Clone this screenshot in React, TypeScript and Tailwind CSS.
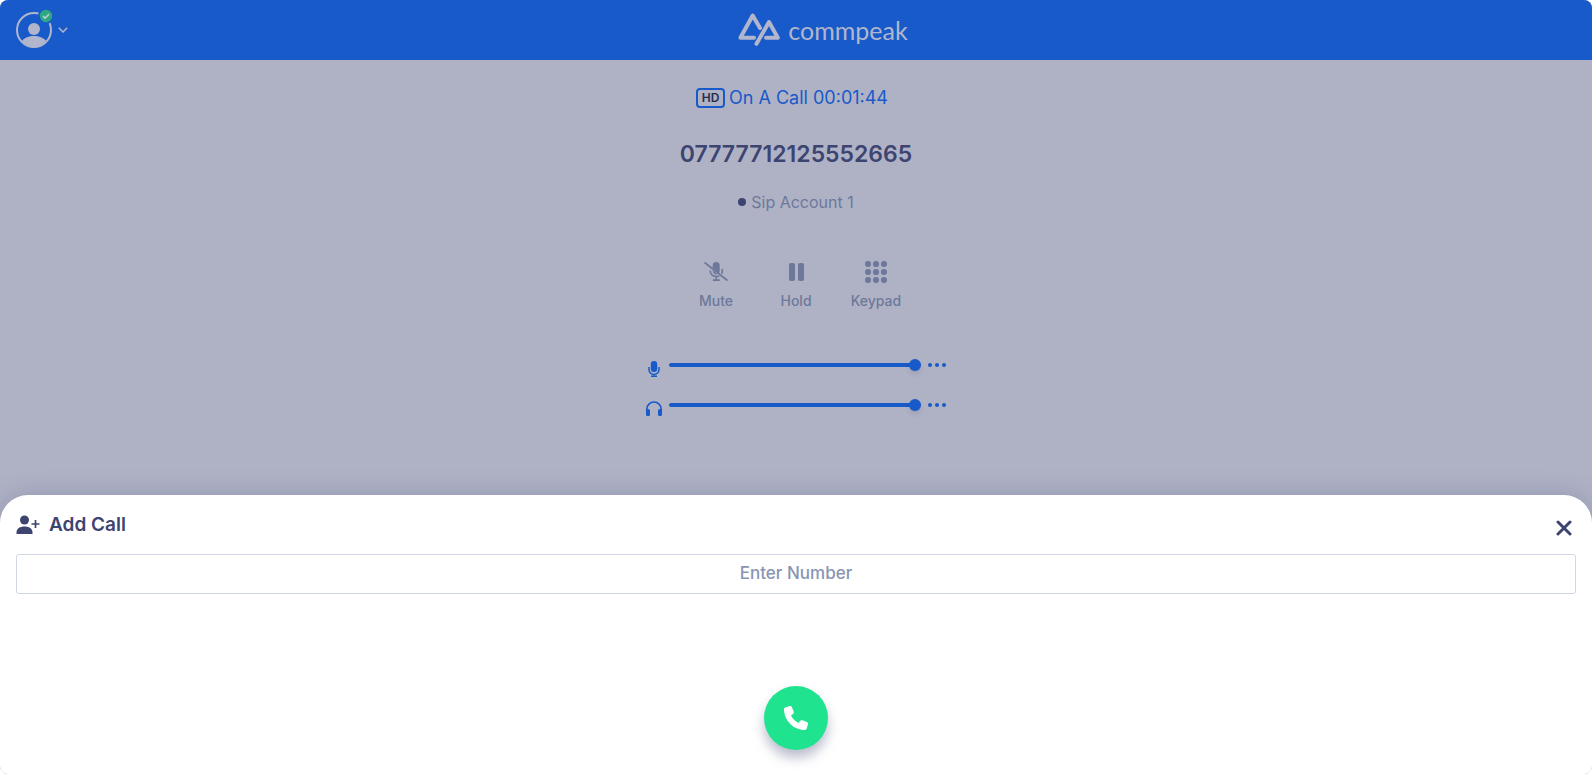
import { useState } from "react";
import type { ReactNode } from "react";

function Logo() {
  return (
    <div className="flex items-center gap-2 text-[#b1b6cc]">
      <svg width="42" height="34" viewBox="0 0 42 34" fill="none" stroke="currentColor" strokeWidth="4" strokeLinecap="round" strokeLinejoin="round">
        <path d="M16 24.700H2.400L14.700 2.500L22 15" />
        <path d="M18.500 30.800L31 9L39.800 24.700H28" />
      </svg>
      <span className="font-['Lato',sans-serif] text-[25px] leading-8">commpeak</span>
    </div>
  );
}

function Avatar() {
  return (
    <span className="relative block size-9">
      <svg width="36" height="36" viewBox="0 0 36 36" fill="none">
        <circle cx="18" cy="18" r="17" stroke="#b1b6cc" strokeWidth="2" />
        <circle cx="18" cy="17" r="6" fill="#b1b6cc" />
        <path d="M6 29C8.500 25.500 13 24 18 24s9.500 1.500 12 5C27 32.500 22.500 34.300 18 34.300S9 32.500 6 29Z" fill="#b1b6cc" />
      </svg>
      <svg className="absolute -top-1 -right-0.5" width="16" height="16" viewBox="0 0 16 16">
        <circle cx="8" cy="8" r="8" fill="#185ac9" />
        <circle cx="8" cy="8" r="6.200" fill="#2da882" />
        <path d="M5 8.200L7 10.200L11.200 6" fill="none" stroke="#b1c9cc" strokeWidth="1.700" />
      </svg>
    </span>
  );
}

function MicIcon() {
  return (
    <svg width="12" height="18" viewBox="0 0 12 18" fill="none">
      <rect x="2.800" y="1" width="6.400" height="11" rx="3" fill="currentColor" />
      <path d="M1 7v2.500a5 5 0 0 0 10 0V7M6 14.500v2M3 16.300h6" stroke="currentColor" strokeWidth="1.500" />
    </svg>
  );
}

function HeadphonesIcon() {
  return (
    <svg width="16" height="16" viewBox="0 0 16 16" fill="none">
      <path d="M.8 11V8.200a7.200 7.200 0 0 1 14.400 0V11" stroke="currentColor" strokeWidth="1.600" />
      <rect x="0" y="8" width="4" height="7" rx="1.500" fill="currentColor" />
      <rect x="12" y="8" width="4" height="7" rx="1.500" fill="currentColor" />
    </svg>
  );
}

function MuteIcon() {
  return (
    <svg width="24" height="22" viewBox="0 0 24 22" fill="none">
      <path d="M8.700 4.500a3.500 3.500 0 0 1 7 0v5.700a3.500 3.500 0 0 1-.6 2L8.700 7Z" fill="currentColor" />
      <path d="M8.700 9.200l5 4.200c-2.500.6-5-.9-5-4.200Z" fill="currentColor" />
      <path d="M6.200 9.500c0 4 3 6 6.300 6 1 0 2-.2 2.800-.6M18.300 8v2c0 1-.2 2-.7 2.800M12.200 15.500v3.500M8.800 19.200h7" stroke="currentColor" strokeWidth="1.700" />
      <path d="M.5 1.500L23.500 19.500" stroke="currentColor" strokeWidth="1.800" />
    </svg>
  );
}

function HoldIcon() {
  return (
    <svg width="16" height="22" viewBox="0 0 16 22" fill="currentColor">
      <rect x="1" y="2" width="6" height="18" rx="2" />
      <rect x="10" y="2" width="6" height="18" rx="2" />
    </svg>
  );
}

function KeypadIcon() {
  return (
    <svg width="22" height="22" viewBox="0 0 22 22" fill="currentColor">
      {[3, 11, 19].map((y) => [3, 11, 19].map((x) => <circle key={`${x}-${y}`} cx={x} cy={y} r="3.100" />))}
    </svg>
  );
}

function CallAction({ label, children }: { label: string; children: ReactNode }) {
  return (
    <button type="button" className="flex w-20 flex-col items-center gap-2 text-sm leading-5 font-medium text-[#6d789a]">
      {children}
      {label}
    </button>
  );
}

function VolumeRow({ label, icon }: { label: string; icon: ReactNode }) {
  const [value, setValue] = useState(100);

  return (
    <div className="flex h-5 items-center text-[#185ac9]">
      <span className="mt-2 flex w-4 justify-center">{icon}</span>
      <input
        type="range"
        aria-label={label}
        value={value}
        onChange={(e) => setValue(Number(e.target.value))}
        className="ml-[7px] h-1 w-[252px] appearance-none rounded-full bg-[#185ac9] [&::-webkit-slider-thumb]:size-3 [&::-webkit-slider-thumb]:appearance-none [&::-webkit-slider-thumb]:rounded-full [&::-webkit-slider-thumb]:bg-[#185ac9] [&::-webkit-slider-thumb]:shadow-md"
      />
      <button type="button" aria-label={`${label} options`} className="ml-[7px] flex gap-[3px]">
        <span className="size-1 rounded-full bg-current" />
        <span className="size-1 rounded-full bg-current" />
        <span className="size-1 rounded-full bg-current" />
      </button>
    </div>
  );
}

function AddCallSheet() {
  return (
    <section className="flex h-[279px] flex-col rounded-t-[28px] bg-white px-4 pt-4 pb-6 shadow-[0_0_24px_rgba(61,68,112,0.25)]">
      <div className="flex h-7 items-center justify-between text-[#3d4470]">
        <h2 className="flex items-center gap-[9px] text-[19px] font-semibold">
          <svg width="24" height="20" viewBox="0 0 24 20" fill="currentColor">
            <circle cx="8.500" cy="5" r="4.500" />
            <path d="M.5 19v-1.500C.5 13.500 4 11.500 8.500 11.500s8 2 8 6V19Z" />
            <path d="M19.500 5v8M15.500 9h8" stroke="currentColor" strokeWidth="1.700" />
          </svg>
          Add Call
        </h2>
        <button type="button" aria-label="Close" className="mt-1.5 mr-1">
          <svg width="16" height="16" viewBox="0 0 16 16" fill="none" stroke="currentColor" strokeWidth="3" strokeLinecap="round">
            <path d="M2 2L14 14M14 2L2 14" />
          </svg>
        </button>
      </div>
      <input
        type="tel"
        aria-label="Enter Number"
        placeholder="Enter Number"
        className="mt-[15px] h-10 w-full rounded-[3px] border border-[#d0d6e6] pb-0.5 text-center text-[17px] font-medium text-[#3d4470] outline-none placeholder:text-[#8995b3]"
      />
      <button
        type="button"
        aria-label="Call"
        className="mx-auto mt-auto flex size-16 items-center justify-center rounded-full bg-[#20e390] text-white shadow-[0_8px_12px_rgba(61,68,112,0.35)]"
      >
        <svg width="24" height="24" viewBox="0 0 24 24" fill="currentColor">
          <path d="M1.200 1.400L5.600.1C6.600-.2 7.500.3 7.900 1.200L9.700 5.500C10 6.300 9.800 7.200 9.200 7.800L7 9.600C8.500 12.800 11.200 15.500 14.400 17L16.200 14.800C16.800 14.200 17.700 14 18.500 14.300L22.800 16.100C23.700 16.500 24.200 17.400 23.900 18.400L22.600 22.800C22.400 23.500 21.700 24 21 24C9.500 24 0 14.500 0 3C0 2.300.5 1.600 1.200 1.400Z" />
        </svg>
      </button>
    </section>
  );
}

export default function App() {
  return (
    <div className="bg-white">
      <div className="flex min-h-screen flex-col overflow-hidden rounded-lg bg-[#afb2c5] font-['Inter',sans-serif]">
        <header className="grid h-[60px] grid-cols-[1fr_auto_1fr] items-center bg-[#185ac9] px-4">
          <button type="button" aria-label="Account menu" className="flex items-center gap-1.5 justify-self-start">
            <Avatar />
            <svg width="10" height="6" viewBox="0 0 10 6" fill="none" stroke="#b1b6cc" strokeWidth="1.500">
              <path d="M.8.8L5 5L9.200.8" />
            </svg>
          </button>
          <div className="ml-[54px]">
            <Logo />
          </div>
        </header>

        <main className="flex flex-1 flex-col items-center">
          <p className="mt-6 flex h-7 items-center gap-1 pr-2 text-lg text-[#185ac9]">
            <span className="flex h-5 w-[29px] items-center justify-center rounded-[4px] border-2 border-[#185ac9] text-xs font-semibold text-[#262d4d]">
              HD
            </span>
            On A Call 00:01:44
          </p>
          <h1 className="mt-6 text-[23px] leading-9 font-semibold text-[#3d4470]">07777712125552665</h1>
          <p className="mt-4 flex h-7 items-center gap-[5px] text-base text-[#6d789a]">
            <span className="size-2 rounded-full bg-[#3d4470]" />
            Sip Account 1
          </p>

          <div className="mt-[45px] flex">
            <CallAction label="Mute">
              <MuteIcon />
            </CallAction>
            <CallAction label="Hold">
              <HoldIcon />
            </CallAction>
            <CallAction label="Keypad">
              <KeypadIcon />
            </CallAction>
          </div>

          <div className="mt-11 flex flex-col gap-5">
            <VolumeRow label="Microphone volume" icon={<MicIcon />} />
            <VolumeRow label="Speaker volume" icon={<HeadphonesIcon />} />
          </div>
        </main>

        <AddCallSheet />
      </div>
    </div>
  );
}
